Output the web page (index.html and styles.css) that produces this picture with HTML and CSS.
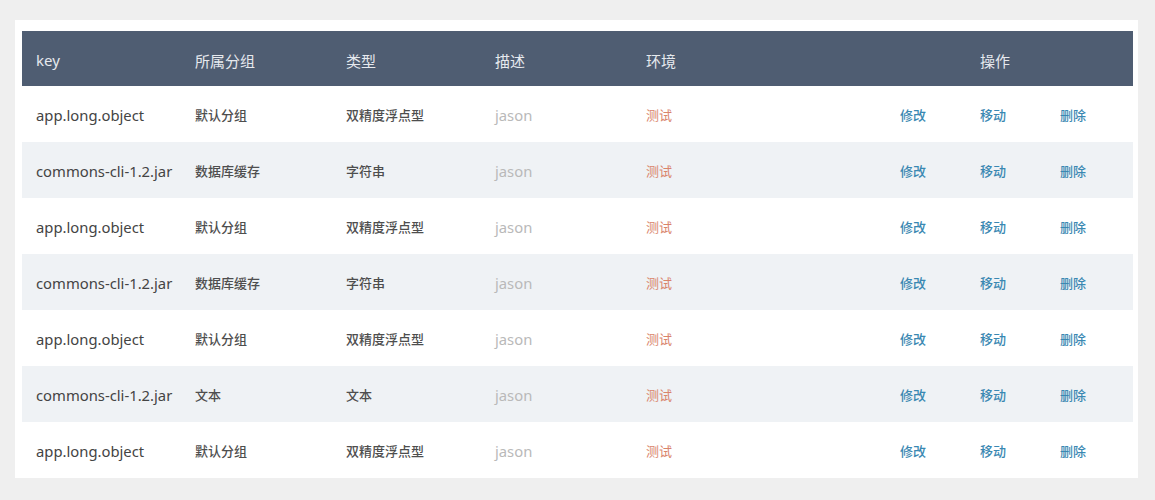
FILE: index.html
```html
<!DOCTYPE html>
<html lang="zh-CN">
<head>
<meta charset="utf-8">
<title>配置列表</title>
<link rel="stylesheet" href="styles.css">
</head>
<body>
<div class="card">
  <table class="grid">
    <colgroup>
      <col class="c-key"><col class="c-group"><col class="c-type"><col class="c-desc"><col class="c-env"><col class="c-ops">
    </colgroup>
    <thead>
      <tr>
        <th>key</th><th>所属分组</th><th>类型</th><th>描述</th><th>环境</th><th class="ops-h">操作</th>
      </tr>
    </thead>
    <tbody>
      <tr><td class="key">app.long.object</td><td>默认分组</td><td>双精度浮点型</td><td class="desc">jason</td><td class="env">测试</td><td><div class="ops"><a>修改</a><a>移动</a><a>删除</a></div></td></tr>
      <tr><td class="key">commons-cli-1.2.jar</td><td>数据库缓存</td><td>字符串</td><td class="desc">jason</td><td class="env">测试</td><td><div class="ops"><a>修改</a><a>移动</a><a>删除</a></div></td></tr>
      <tr><td class="key">app.long.object</td><td>默认分组</td><td>双精度浮点型</td><td class="desc">jason</td><td class="env">测试</td><td><div class="ops"><a>修改</a><a>移动</a><a>删除</a></div></td></tr>
      <tr><td class="key">commons-cli-1.2.jar</td><td>数据库缓存</td><td>字符串</td><td class="desc">jason</td><td class="env">测试</td><td><div class="ops"><a>修改</a><a>移动</a><a>删除</a></div></td></tr>
      <tr><td class="key">app.long.object</td><td>默认分组</td><td>双精度浮点型</td><td class="desc">jason</td><td class="env">测试</td><td><div class="ops"><a>修改</a><a>移动</a><a>删除</a></div></td></tr>
      <tr><td class="key">commons-cli-1.2.jar</td><td>文本</td><td>文本</td><td class="desc">jason</td><td class="env">测试</td><td><div class="ops"><a>修改</a><a>移动</a><a>删除</a></div></td></tr>
      <tr><td class="key">app.long.object</td><td>默认分组</td><td>双精度浮点型</td><td class="desc">jason</td><td class="env">测试</td><td><div class="ops"><a>修改</a><a>移动</a><a>删除</a></div></td></tr>
    </tbody>
  </table>
</div>
</body>
</html>
```
FILE: styles.css
```css
html, body {
  margin: 0;
  padding: 0;
}
body {
  background: #efefef;
  font-family: "Noto Sans", "Noto Sans CJK SC", sans-serif;
  color: #555;
  padding-top: 20px;
}
.card {
  background: #fff;
  margin: 0 17px 0 15px;
  padding: 11px 5px 0 7px;
}
.grid {
  width: 100%;
  border-collapse: collapse;
  table-layout: fixed;
}
.c-key { width: 159px; }
.c-group { width: 151px; }
.c-type { width: 149px; }
.c-desc { width: 151px; }
.c-ops { width: 247px; }
.grid th {
  background: #4f5d72;
  color: #e6e9ee;
  font-weight: 400;
  font-size: 15px;
  text-align: left;
  height: 55px;
  padding: 3px 0 0 14px;
  box-sizing: border-box;
}
.grid th.ops-h {
  padding-left: 94px;
}
.grid td {
  height: 56px;
  padding: 1px 0 0 14px;
  box-sizing: border-box;
  font-size: 13px;
  font-weight: 500;
  color: #4e4e4e;
  white-space: nowrap;
}
.grid tbody tr:nth-child(even) td {
  background: #eff2f5;
}
.grid td.key {
  font-size: 14.8px;
  font-weight: 400;
  color: #444;
}
.grid td.desc {
  font-size: 14.8px;
  font-weight: 400;
  color: #b9b9b9;
}
.grid td.env {
  color: #d9846b;
  font-weight: 400;
}
.ops {
  display: flex;
  gap: 54px;
}
.ops a {
  color: #3a88b2;
  font-weight: 500;
}
```
